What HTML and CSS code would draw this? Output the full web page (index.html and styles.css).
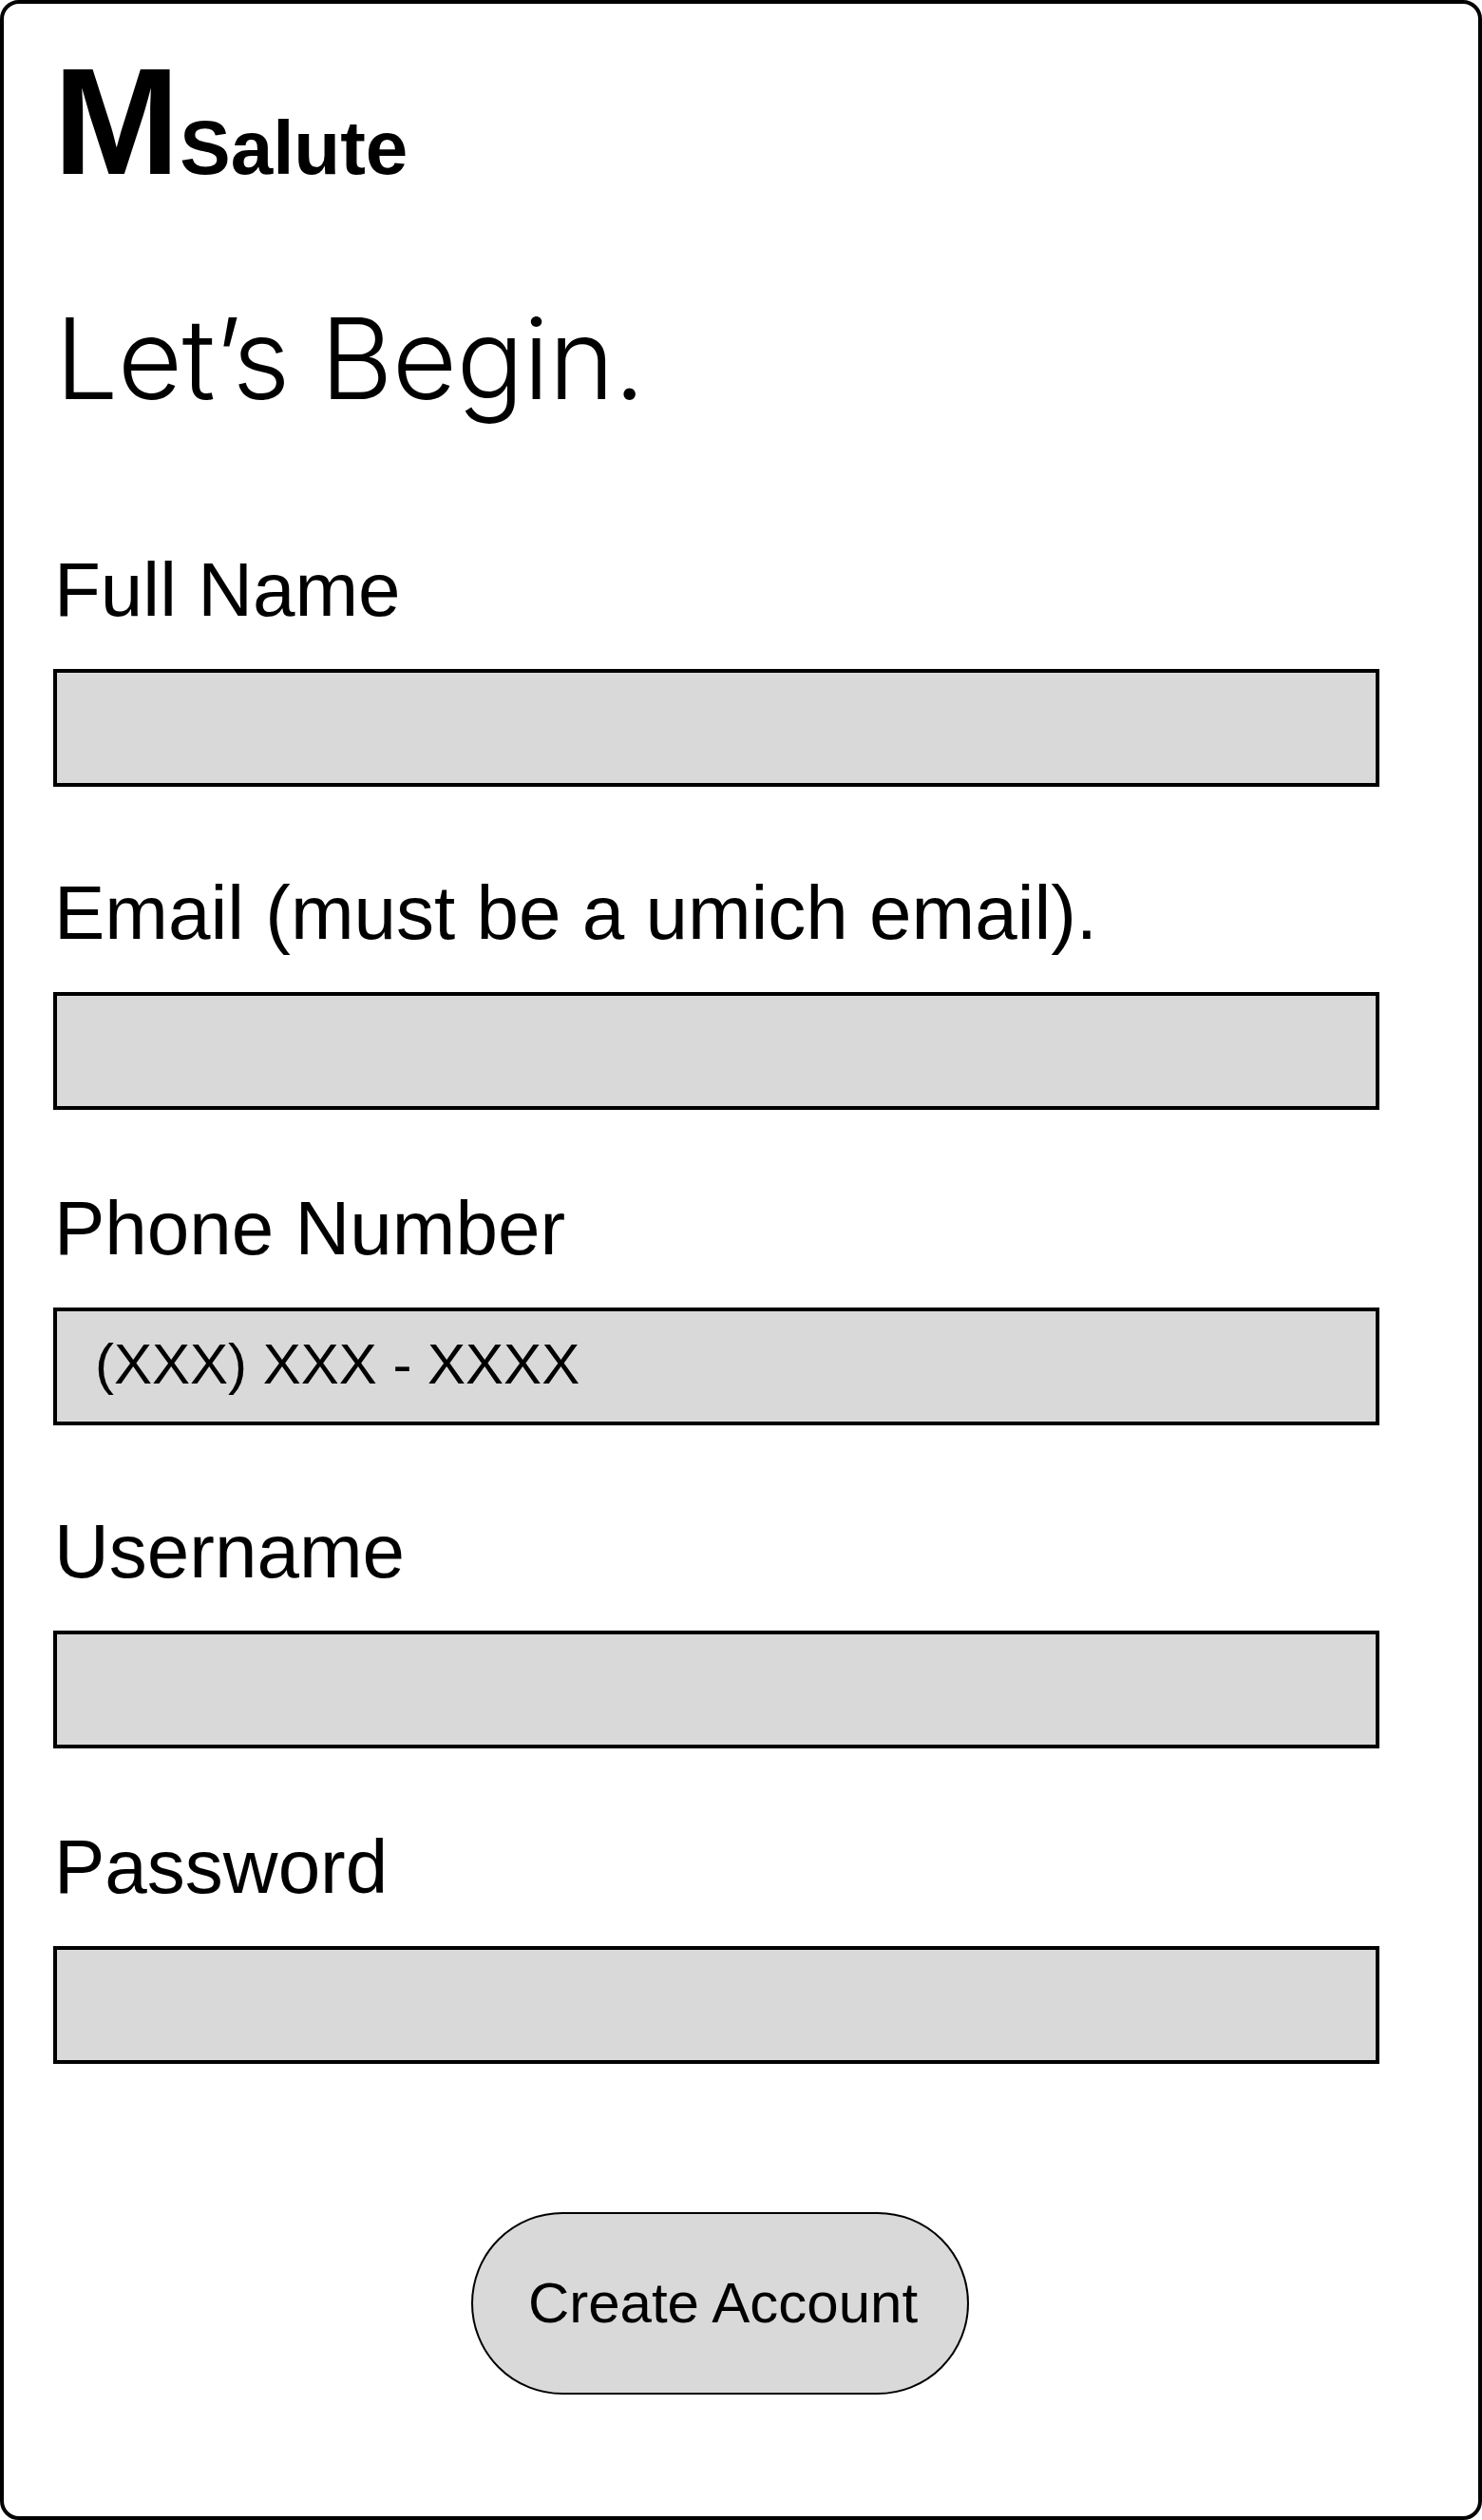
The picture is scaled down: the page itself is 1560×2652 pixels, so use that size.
FILE: index.html
```html
<!DOCTYPE html>
<html lang="en">
<head>
  <meta charset="UTF-8" />
  <title>M Salute - Create Account</title>
  <link rel="stylesheet" href="styles.css">
</head>
<body>

  <div class="screen">
    <div class="logo"><span class="logo-m">M</span>Salute</div>
    <h1>Let’s Begin.</h1>

    <form class="signup">
      <div class="field">
        <label for="name">Full Name</label>
        <input type="text" id="name">
      </div>
      <div class="field email">
        <label for="email">Email (must be a umich email).</label>
        <input type="email" id="email">
      </div>
      <div class="field">
        <label for="phone">Phone Number</label>
        <input type="tel" id="phone" placeholder="(XXX) XXX - XXXX">
      </div>
      <div class="field username">
        <label for="username">Username</label>
        <input type="text" id="username">
      </div>
      <div class="field">
        <label for="password">Password</label>
        <input type="password" id="password">
      </div>
      <button type="button">Create Account</button>
    </form>
  </div>

</body>
</html>
```

FILE: styles.css
```css
* {
  box-sizing: border-box;
}

body {
  margin: 0;
  background: #fff;
  color: #000;
  font-family: Helvetica, "Liberation Sans", Arial, sans-serif;
}

.screen {
  width: 1560px;
  height: 2652px;
  padding: 32px 52px;
  border: 4px solid #000;
  border-radius: 20px;
}

.logo {
  height: 184px;
  line-height: 184px;
  font-size: 80px;
  font-weight: bold;
}

.logo-m {
  font-size: 160px;
}

h1 {
  margin: 85px 0 0;
  height: 144px;
  line-height: 144px;
  font-family: Inter, "Helvetica Neue", sans-serif;
  font-size: 118px;
  font-weight: 300;
  letter-spacing: -0.8px;
  padding-left: 2px;
}

.signup {
  display: flex;
  flex-direction: column;
  width: 1396px;
  margin-top: 123px;
}

.field {
  display: flex;
  flex-direction: column;
  margin-top: 76px;
}

.field:first-child {
  margin-top: 0;
}

.email, .username {
  margin-top: 84px;
}

label {
  height: 97px;
  padding: 1px 0 0 1px;
  line-height: 96px;
  margin-bottom: 35px;
  font-size: 80px;
}

input {
  height: 124px;
  padding: 0 40px 6px;
  border: 4px solid #000;
  border-radius: 0;
  background: #d9d9d9;
  color: #000;
  font-family: inherit;
  font-size: 60px;
}

input::placeholder {
  color: #000;
  opacity: 1;
}

button {
  width: 524px;
  height: 192px;
  margin: 156px 0 0 440px;
  padding: 0 0 2px 6px;
  border: 2px solid #000;
  border-radius: 96px;
  background: #d9d9d9;
  color: #000;
  font-family: inherit;
  font-size: 60px;
  cursor: pointer;
}
```
